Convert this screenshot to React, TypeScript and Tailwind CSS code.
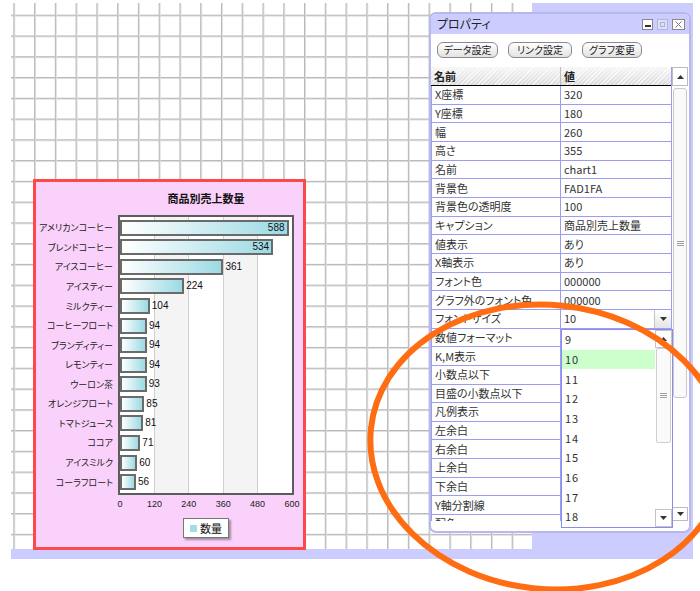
import React from "react";

const bars: [string, number][] = [
  ["アメリカンコーヒー", 588],
  ["ブレンドコーヒー", 534],
  ["アイスコーヒー", 361],
  ["アイスティー", 224],
  ["ミルクティー", 104],
  ["コーヒーフロート", 94],
  ["ブランディティー", 94],
  ["レモンティー", 94],
  ["ウーロン茶", 93],
  ["オレンジフロート", 85],
  ["トマトジュース", 81],
  ["ココア", 71],
  ["アイスミルク", 60],
  ["コーラフロート", 56],
];

const rows: [string, string][] = [
  ["X座標", "320"],
  ["Y座標", "180"],
  ["幅", "260"],
  ["高さ", "355"],
  ["名前", "chart1"],
  ["背景色", "FAD1FA"],
  ["背景色の透明度", "100"],
  ["キャプション", "商品別売上数量"],
  ["値表示", "あり"],
  ["X軸表示", "あり"],
  ["フォント色", "000000"],
  ["グラフ外のフォント色", "000000"],
  ["フォントサイズ", "__combo__"],
  ["数値フォーマット", ""],
  ["K,M表示", ""],
  ["小数点以下", ""],
  ["目盛の小数点以下", ""],
  ["凡例表示", ""],
  ["左余白", ""],
  ["右余白", ""],
  ["上余白", ""],
  ["下余白", ""],
  ["Y軸分割線", ""],
  ["配色", ""],
];

const SCALE = 172 / 600;

function Up() {
  return (
    <svg width="7" height="4" viewBox="0 0 7 4">
      <path d="M0 4 L3.5 0 L7 4Z" fill="#333" />
    </svg>
  );
}
function Down() {
  return (
    <svg width="7" height="4" viewBox="0 0 7 4">
      <path d="M0 0 L3.5 4 L7 0Z" fill="#333" />
    </svg>
  );
}
function Grip() {
  return (
    <div className="flex flex-col gap-[1px]">
      <div className="w-[7px] h-px bg-[#a0a0a0]" />
      <div className="w-[7px] h-px bg-[#a0a0a0]" />
      <div className="w-[7px] h-px bg-[#a0a0a0]" />
    </div>
  );
}

function Chart() {
  return (
    <div className="absolute left-[22px] top-[176px] w-[273px] h-[371px] border-[3px] border-[#ff4848] bg-[#fad1fa] flex gap-[5px]">
      <div className="w-[77px] pt-[36px] flex flex-col">
        {bars.map(([n]) => (
          <div
            key={n}
            className="h-[19.57px] flex items-center justify-end text-[9px] leading-none text-[#222] whitespace-nowrap"
          >
            {n}
          </div>
        ))}
      </div>
      <div className="w-[176px] flex flex-col">
        <div className="h-[33px] flex items-center justify-center text-[11px] font-bold text-[#111]">
          商品別売上数量
        </div>
        <div className="h-[280px] border-2 border-[#5c5c5c] bg-[linear-gradient(to_right,#ffffff_0_34px,#cfcfcf_34px_35px,#f4f4f4_35px_68px,#cfcfcf_68px_69px,#ffffff_69px_103px,#cfcfcf_103px_104px,#f4f4f4_104px_137px,#cfcfcf_137px_138px,#ffffff_138px)] pt-[1px] flex flex-col">
          {bars.map(([n, v], i) => (
            <div key={n} className="h-[19.57px] flex items-center">
              <div
                style={{ width: v * SCALE }}
                className="h-[16px] border-2 border-[#6a6a6a] bg-[linear-gradient(to_right,#ffffff,#9cdae4)] flex items-center justify-end pr-[2px]"
              >
                {i < 2 && (
                  <span className="text-[10px] leading-none font-['Liberation_Sans',sans-serif] text-[#111]">
                    {v}
                  </span>
                )}
              </div>
              {i >= 2 && (
                <span className="ml-[2px] text-[10px] leading-none font-['Liberation_Sans',sans-serif] text-[#111]">
                  {v}
                </span>
              )}
            </div>
          ))}
        </div>
        <div className="ml-[-15.2px] w-[206.4px] grid grid-cols-6 text-center mt-[2px] h-[14px] leading-[14px] text-[9px] font-['Liberation_Sans',sans-serif] text-[#222]">
          <span>0</span>
          <span>120</span>
          <span>240</span>
          <span>360</span>
          <span>480</span>
          <span>600</span>
        </div>
        <div className="mt-[7px] mx-auto w-[46px] h-[20px] bg-white border border-[#777] shadow-[2px_2px_2px_rgba(0,0,0,0.35)] flex items-center justify-center gap-[3px]">
          <span className="w-[7px] h-[7px] bg-[#a0dde6]" />
          <span className="text-[11px] leading-none text-[#111]">数量</span>
        </div>
      </div>
    </div>
  );
}

function PropWindow() {
  return (
    <div className="absolute left-[418px] top-[9px] w-[262px] h-[521px] rounded-[7px] border-2 border-[#b8b8ee] bg-white overflow-hidden flex flex-col">
      <div className="h-[20px] shrink-0 bg-[#ccccff] flex items-center pl-[6px] pr-[4px]">
        <span className="text-[12px] leading-none text-[#222]">プロパティ</span>
        <div className="ml-auto flex items-center gap-[4px]">
          <div className="w-[11px] h-[11px] border border-[#888] bg-white flex items-end justify-center pb-[2px]">
            <div className="w-[6px] h-[2px] bg-[#333]" />
          </div>
          <div className="w-[11px] h-[11px] border border-[#b4b4dc] bg-[#dedef6] flex items-center justify-center">
            <div className="w-[5px] h-[5px] border border-[#aeaed6]" />
          </div>
          <div className="w-[13px] h-[11px] border border-[#888] bg-white flex items-center justify-center">
            <svg width="7" height="7" viewBox="0 0 7 7">
              <path d="M0.5 0.5 L6.5 6.5 M6.5 0.5 L0.5 6.5" stroke="#777" strokeWidth="1" />
            </svg>
          </div>
        </div>
      </div>
      <div className="pt-[8px] pl-[6px] flex gap-[10px]">
        {[
          ["データ設定", "w-[61px]"],
          ["リンク設定", "w-[64px]"],
          ["グラフ変更", "w-[60px]"],
        ].map(([t, w]) => (
          <div
            key={t}
            className={`${w} h-[16px] rounded-[6px] border border-[#8a8a8a] bg-[linear-gradient(#ffffff,#e2e2e2)] text-[10px] leading-none flex items-center justify-center text-[#222]`}
          >
            {t}
          </div>
        ))}
      </div>
      <div className="mt-[9px] flex h-[454px]">
        <div className="w-[241px] flex flex-col border-r border-[#9c9cf0]">
          <div className="h-[19px] shrink-0 border-b border-black flex bg-[repeating-linear-gradient(135deg,rgba(255,255,255,0.7)_0_1px,transparent_1px_3px),linear-gradient(#f6f6f6,#dcdcdc)] text-[11px] font-bold leading-none text-[#222]">
            <div className="w-[130px] border-r border-[#bdbdbd] pl-[3px] flex items-center">名前</div>
            <div className="flex-1 pl-[3px] flex items-center">値</div>
          </div>
          <div className="h-[435px] overflow-hidden border-l border-[#9c9cf0]">
            {rows.map(([n, v]) => (
              <div
                key={n}
                className="h-[18.67px] border-b border-[#9c9cf0] flex text-[11px] leading-none text-[#333]"
              >
                <div className="w-[129px] border-r border-[#9c9cf0] pl-[3px] flex items-center whitespace-nowrap overflow-hidden">
                  {n}
                </div>
                {v === "__combo__" ? (
                  <div className="flex-1 flex bg-white">
                    <div className="flex-1 flex items-center pl-[3px]">10</div>
                    <div className="w-[17px] border-l border-[#c4c4c4] bg-[linear-gradient(#ffffff,#e4e4e4)] flex items-center justify-center">
                      <Down />
                    </div>
                  </div>
                ) : (
                  <div className="flex-1 pl-[3px] flex items-center whitespace-nowrap">{v}</div>
                )}
              </div>
            ))}
          </div>
        </div>
        <div className="w-[16px] flex flex-col">
          <div className="h-[19px] border border-[#bbb] bg-white flex items-center justify-center">
            <Up />
          </div>
          <div className="flex-1 px-[1px] pt-[2px]">
            <div className="h-[310px] rounded-[3px] border border-[#c8c8c8] bg-[#fafafa] flex items-center justify-center">
              <Grip />
            </div>
          </div>
          <div className="h-[14px] border border-[#bbb] bg-white flex items-center justify-center">
            <Down />
          </div>
        </div>
      </div>
      <div className="absolute left-[130px] top-[315px] w-[112px] h-[199px] border border-[#8a8af0] bg-white flex">
        <div className="flex-1 flex flex-col">
          {["9", "10", "11", "12", "13", "14", "15", "16", "17", "18"].map((n) => (
            <div
              key={n}
              className={`h-[19.67px] flex items-center pl-[3px] text-[11px] leading-none tracking-[1px] text-[#333] ${
                n === "10" ? "bg-[#ccffcc]" : ""
              }`}
            >
              {n}
            </div>
          ))}
        </div>
        <div className="w-[17px] flex flex-col">
          <div className="h-[18px] border border-[#c4c4c4] bg-white flex items-center justify-center">
            <Up />
          </div>
          <div className="flex-1 px-[1px]">
            <div className="h-[95px] rounded-[2px] border border-[#cfcfcf] bg-[#fafafa] flex items-center justify-center">
              <Grip />
            </div>
          </div>
          <div className="h-[18px] border border-[#c4c4c4] bg-white flex items-center justify-center">
            <Down />
          </div>
        </div>
      </div>
    </div>
  );
}

export default function App() {
  return (
    <div className="relative w-[700px] h-[591px] overflow-hidden bg-white font-['Noto_Sans_CJK_JP',sans-serif] [font-feature-settings:'palt']">
      <div className="pt-[3px] pl-[11px]">
        <div className="relative w-[682px] h-[556px] bg-[#ccccff]">
          <div className="w-[521px] h-[546px] bg-white bg-[linear-gradient(to_right,#b8b8b8_0_1px,#dedede_1px_2px,transparent_2px),linear-gradient(to_bottom,#b8b8b8_0_1px,#dedede_1px_2px,transparent_2px)] bg-[size:20.78px_20.78px] bg-[position:2.3px_11.7px]" />
          <Chart />
          <PropWindow />
        </div>
      </div>
      <svg className="absolute inset-0 pointer-events-none" width="700" height="591" viewBox="0 0 700 591">
        <ellipse
          cx="548"
          cy="447"
          rx="178"
          ry="142"
          transform="rotate(6 548 447)"
          fill="none"
          stroke="#ff6c12"
          strokeWidth="6"
        />
      </svg>
    </div>
  );
}
